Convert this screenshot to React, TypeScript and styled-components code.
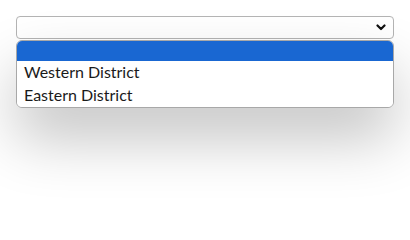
import React from "react";
import styled, { createGlobalStyle } from "styled-components";

const Global = createGlobalStyle`
  html, body { margin: 0; padding: 0; background: #ffffff; }
  body { font-family: "Lato", "Open Sans", sans-serif; }
`;

const Page = styled.div`
  width: 410px;
  height: 201px;
  padding: 16px;
  box-sizing: border-box;
  background: #ffffff;
`;

const Wrap = styled.div`
  width: 378px;
  display: flex;
  flex-direction: column;
  gap: 1px;
`;

const SelectBox = styled.div`
  height: 23px;
  box-sizing: border-box;
  border: 1px solid #b4b4b4;
  border-radius: 4px;
  background: #ffffff;
  display: flex;
  align-items: center;
  justify-content: flex-end;
  padding-right: 7px;
`;

const Panel = styled.div`
  box-sizing: border-box;
  border: 1px solid #a8a8a8;
  border-radius: 6px;
  background: #ffffff;
  overflow: hidden;
  box-shadow: 0 30px 60px rgba(0, 0, 0, 0.24);
`;

const Option = styled.div<{ $selected?: boolean; $h: number }>`
  height: ${(p) => p.$h}px;
  box-sizing: border-box;
  display: flex;
  align-items: center;
  padding: 0 0 3px 7px;
  font-size: 16px;
  color: #1a1a1a;
  background: ${(p) => (p.$selected ? "#1967d2" : "#ffffff")};
`;

const Chevron = () => (
  <svg width="10" height="7" viewBox="0 0 10 7">
    <path d="M1.5 1.5 L5 5 L8.5 1.5" fill="none" stroke="#111" strokeWidth="2.2" strokeLinecap="round" strokeLinejoin="round" />
  </svg>
);

export default function App() {
  return (
    <Page>
      <Global />
      <Wrap>
        <SelectBox>
          <Chevron />
        </SelectBox>
        <Panel>
          <Option $selected $h={20}></Option>
          <Option $h={23}>Western District</Option>
          <Option $h={23}>Eastern District</Option>
        </Panel>
      </Wrap>
    </Page>
  );
}
